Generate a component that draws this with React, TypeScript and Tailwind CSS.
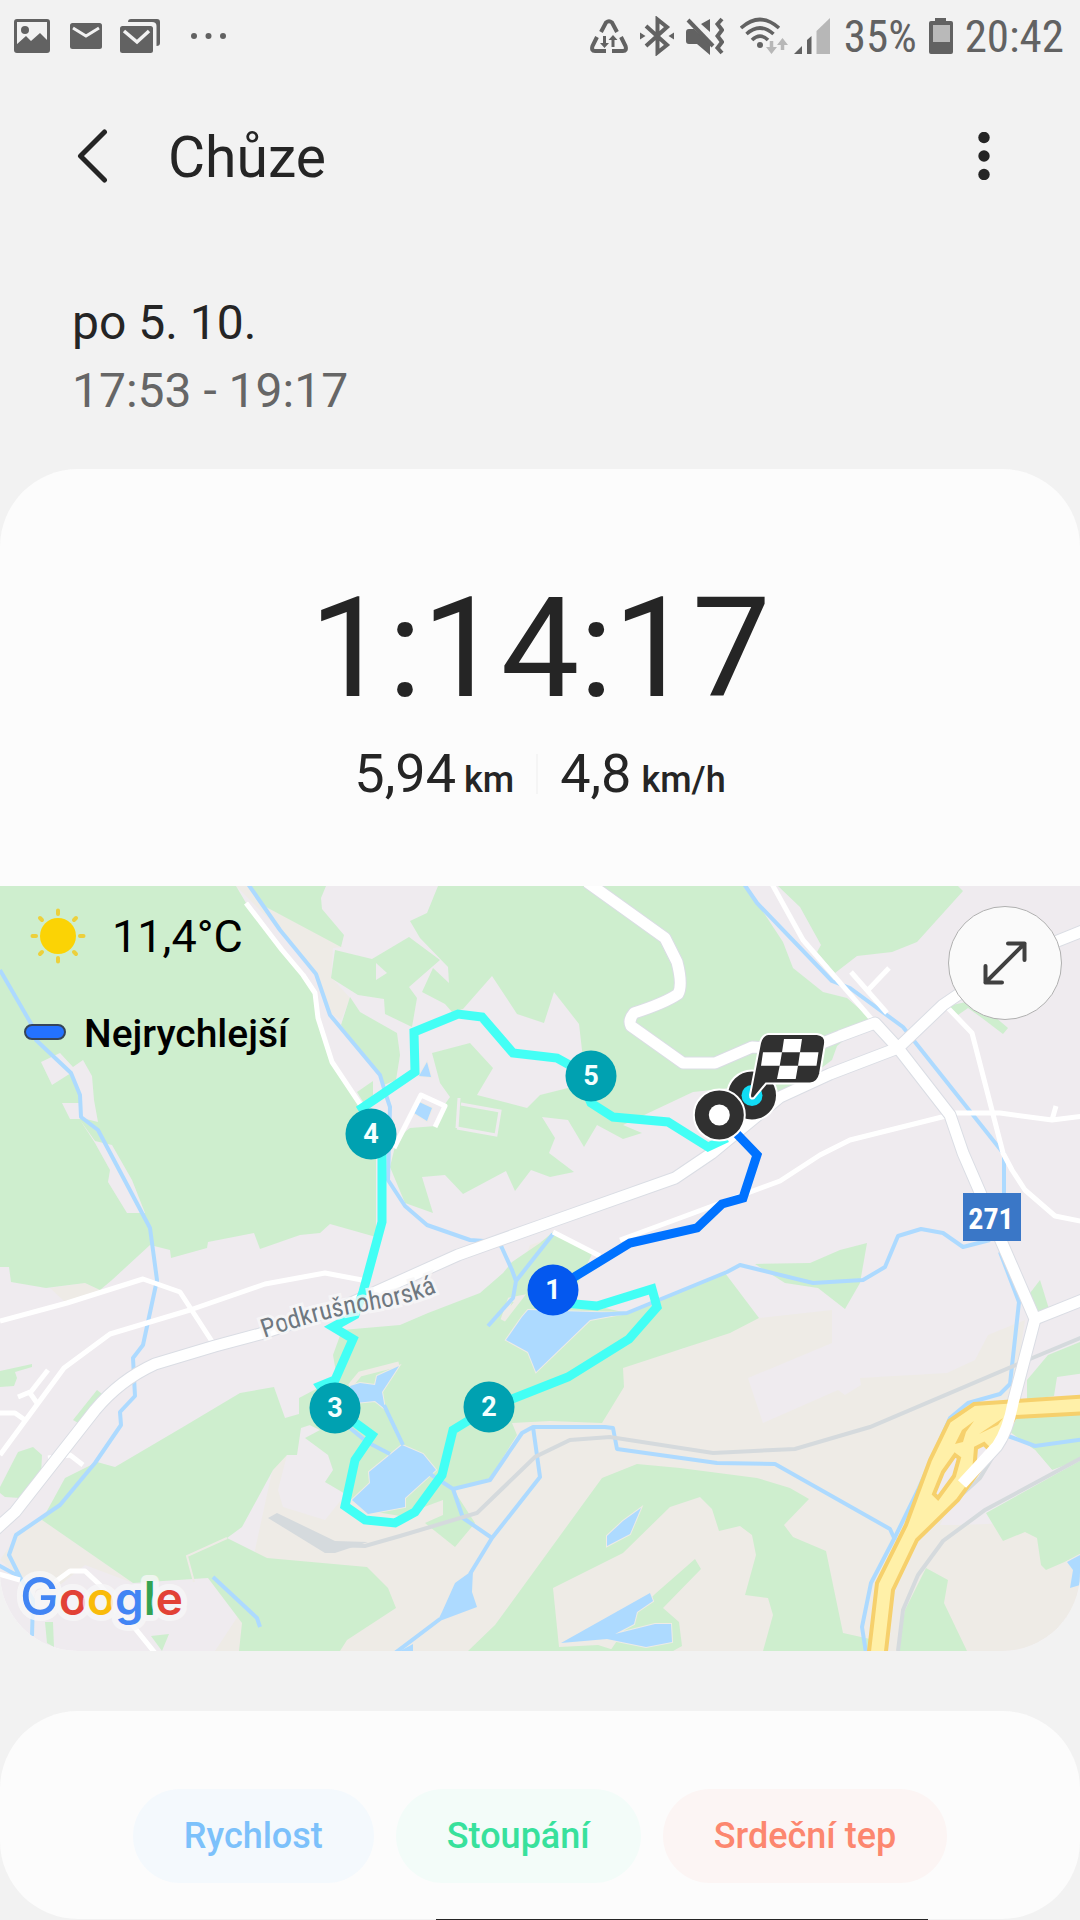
const fastest = 'Nejrychlejší';

const metrics = [
  { label: 'Rychlost', className: 'bg-[#f4f9fd] text-[#7cc1fb]' },
  { label: 'Stoupání', className: 'bg-[#f3fcf9] text-[#38e19c]' },
  { label: 'Srdeční tep', className: 'bg-[#fcf5f4] text-[#fc876f]' },
];

const kilometres = [
  { n: 5, x: 591, y: 1076, fill: '#00a1b1' },
  { n: 4, x: 371, y: 1134, fill: '#00a1b1' },
  { n: 3, x: 335, y: 1408, fill: '#00a1b1' },
  { n: 2, x: 489, y: 1407, fill: '#00a1b1' },
  { n: 1, x: 553, y: 1290, fill: '#0458ef' },
];

const majorRoads = [
  'M-5 1530L15 1512 95 1410Q120 1380 155 1364L215 1346 260 1334 340 1308 458 1255 545 1224 675 1178 712 1153 780 1097 830 1074 898 1048',
  'M587 882L665 938 677 962Q683 985 678 994 665 1003 634 1013 628 1020 631 1026L683 1063 715 1063 752 1047 805 1050 840 1036 875 1023 898 1048 950 1115 963 1153 1035 1319 1013 1403Q1008 1430 997 1446L962 1484',
  'M898 1048L943 1005 965 990 1040 948 1085 930',
  'M1035 1319L1085 1299',
];

const minorRoads = [
  'M246 903L282 950 303 975 315 993 318 1018 332 1062 362 1107',
  'M0 1321L67 1303 143 1279 180 1292 213 1343',
  'M0 1455L64 1368 110 1334 190 1310 265 1284 325 1273 362 1280',
  'M0 1413H15L25 1420',
  'M37 1403L30 1393 48 1370M18 1397L30 1392',
  'M48 1458L70 1455 83 1465',
  'M772 884L803 940 875 1023',
  'M851 972L887 1013M868 990L889 968',
  'M948 1008L972 1033 1003 1153 1012 1170 1025 1190 1055 1216 1085 1222',
  'M950 1113H1000L1052 1120 1085 1116M1052 1120L1056 1106',
  'M950 1115L850 1140 820 1155 780 1181 680 1218 620 1240',
  'M553 1232L600 1256',
  'M394 1148L421 1095 445 1106 435 1127',
  'M-5 1573L20 1580M55 1582L70 1571H85L100 1585 155 1653',
];

const rivers = [
  'M248 884L280 930 316 974 330 1015 380 1075 385 1092 390 1107 388 1180 405 1206 427 1225 470 1240 499 1242 502 1248 512 1270 516 1281 513 1298 488 1326M553 1234L516 1281',
  'M0 970L33 1027 36 1040 71 1073 80 1095 81 1117 98 1130 150 1228 157 1280 143 1345 133 1358 135 1396 120 1412 121 1425 95 1463 60 1505 16 1535 9 1555 20 1577 33 1600 32 1636M-2 1565L20 1577',
  'M744 884L757 903 832 981 850 988 903 1027 1004 1154V1210M1000 1252L1019 1302 1010 1384 1000 1394 968 1403 950 1418 918 1490 895 1537 871 1583 862 1627 866 1653',
  'M580 1316L627 1313 727 1272 740 1265 813 1283 863 1280 885 1267 898 1236 921 1229 943 1233 963 1247 990 1240',
  'M453 1489L490 1480 522 1433 533 1427H605L613 1428 617 1449 717 1463 775 1464 890 1529 895 1540',
  'M533 1427L540 1477 492 1538 470 1574M430 1474L453 1489 463 1518 492 1538',
  'M440 1619L395 1653M384 1405L403 1445M350 1428L367 1442 390 1454',
  'M213 1577L257 1618 260 1627',
  'M1008 1436L1035 1446 1085 1439',
];

const forests = [
  'M0 886H236L246 903 282 950 303 975 315 993 318 1018 332 1062 360 1105 376 1130V1237L330 1224 320 1233 300 1235 260 1249 254 1233 208 1242 207 1248 171 1258 170 1250 150 1245 112 1280 100 1290 85 1283 46 1288 11 1282 9 1267H0Z',
  'M249 886H326L321 898 322 909 344 935 341 947 266 907Z',
  'M335 950L372 959 409 937 440 960 409 987 417 998 412 1027 385 1014 384 999 358 995 331 978Z',
  'M350 997L360 1012 397 1033 400 1055 396 1080 384 1085 378 1074 341 1025Z',
  'M357 1092L373 1081V1095L365 1105Z',
  // hills above the town
  'M438 886L427 913 410 921 420 938 448 967 449 983 433 968 422 992 445 1004 452 1012 463 1009 492 976 517 1014 544 1023 554 992 579 1024 582 1050 580 1085 540 1095 527 1108 477 1095 493 1068 470 1043 432 1053 440 1083 450 1097 445 1104 436 1126 410 1128 397 1138 390 1167 405 1203 433 1213 422 1177 445 1175 463 1194 506 1171 515 1191 531 1170 550 1177 574 1172 549 1153 555 1138 542 1117 568 1120 584 1147 597 1125 623 1139 642 1133 623 1125 693 1092 730 1088 790 1092 832 1060 837 1046 870 1018 847 998 823 992 793 968 783 942 760 907 745 886Z',
  'M778 886H958L963 891 917 942 892 952 857 956 835 973 817 952 821 945 800 907Z',
  'M948 1006L975 1000 1008 1028 1003 1034 982 1018 968 1008 958 1015Z',
  'M755 1264L810 1263 840 1250 867 1243 860 1283 845 1309 818 1288 785 1283Z',
  'M0 1371L32 1364V1367L15 1372 17 1378 14 1386 0 1387Z',
  'M73 1420L97 1390 107 1398 90 1420 80 1424Z',
  'M0 1487L18 1452 33 1447 42 1455 41 1475 20 1498 5 1497 0 1493Z',
  // woods round the lakes
  'M342 1330L400 1325 428 1313 480 1293 503 1273 512 1262 540 1243 553 1232 593 1252 570 1300 627 1313 725 1273 759 1318 730 1333 623 1368 624 1387 602 1423 550 1421 512 1423 517 1435 490 1478 453 1489 475 1523 455 1547 425 1523 443 1515V1500L400 1516 365 1510 342 1492 325 1482 333 1470 328 1455 305 1438 320 1430 299 1420 299 1398 337 1378 333 1355Z',
  'M65 1478L97 1462 115 1467 183 1427 240 1393 274 1387 285 1418 299 1414 V1398H320L325 1420 301 1428 297 1455H287L273 1470 242 1527 227 1538 267 1558 367 1567 388 1588 396 1608 347 1640 340 1651H239L242 1623 208 1578 133 1583 42 1520Z',
  'M637 1464L680 1468 757 1478 790 1488 809 1499 784 1525 793 1537 826 1551 843 1633 870 1639V1651H763L773 1615 768 1598 745 1595 756 1555 752 1535 740 1526 719 1531 712 1509 700 1497 670 1507 623 1553 553 1588 559 1647 598 1645 617 1651H468L495 1625 602 1478Z',
  'M695 1559L701 1569 663 1608 679 1622 682 1646 673 1651H610L637 1612 655 1594Z',
  'M1027 1297L1040 1280 1049 1309 1035 1314Z',
  'M1027 1380L1048 1355 1085 1340V1373L1057 1377 1054 1396 1027 1400Z',
  'M1013 1415L1085 1410V1458L1052 1470 1035 1450 1010 1432Z',
  'M986 1513L1085 1458V1553L1046 1570 1041 1565 1037 1538 1025 1532 1003 1541Z',
  'M926 1568L948 1580 944 1603 967 1651H897L905 1610Z',
  'M45 1622H53L54 1647 47 1643ZM151 1636L169 1634 162 1651Z',
];

const lakes = [
  'M528 1310L592 1312 627 1313 590 1320 536 1372 528 1352 506 1340 522 1317Z',
  'M402 1445L423 1454 436 1470 405 1498V1507L368 1514 352 1500 370 1483 369 1472Z',
  'M350 1386L360 1383 375 1385 377 1376 399 1366 382 1392 385 1409 375 1401 355 1403Z',
  'M641 1508L630 1534 607 1546V1536L623 1521Z',
  'M650 1593L653 1601 637 1612 634 1624 615 1634 655 1624H671L672 1642 646 1647 607 1639 561 1643Z',
  'M473 1570L472 1592 477 1607 437 1622 442 1612 455 1583ZM413 1644V1651H400Z',
  'M1067 1562L1080 1555V1585L1070 1588 1073 1570Z',
  'M417 1101L432 1108 427 1121 414 1113ZM427 1062L431 1077 419 1076Z',
];

function StatusBar() {
  return (
    <div className="flex h-18 items-center justify-between pl-3.5 pr-4 text-[#626262]">
      <div className="flex items-center">
        <svg className="h-9 w-9" viewBox="0 0 36 36" fill="none">
          <rect x="1.5" y="2.5" width="33" height="31" rx="1.5" stroke="currentColor" strokeWidth="3" />
          <circle cx="11" cy="12" r="4" fill="currentColor" />
          <path d="M2 27L12 18 17 23 26 15 34 23V33H2Z" fill="currentColor" />
        </svg>
        <svg className="ml-5 h-9 w-8" viewBox="0 0 32 36" fill="none">
          <rect y="5" width="32" height="26" rx="2.5" fill="currentColor" />
          <path d="M3 10L16 18 29 10" stroke="#f2f2f2" strokeWidth="3" />
        </svg>
        <svg className="ml-4.5 h-9 w-10" viewBox="0 0 40 36" fill="none">
          <rect y="8" width="33" height="27" rx="2.5" fill="currentColor" />
          <path d="M4 13L17 24 29 13" stroke="#f2f2f2" strokeWidth="3.5" />
          <path d="M8 4Q8 1 11 1H37Q40 1 40 4V25Q40 28 36.500 28V8Q36.500 4 32 4Z" fill="currentColor" />
        </svg>
        <svg className="ml-7.5 h-9 w-9" viewBox="0 0 36 36" fill="currentColor">
          <circle cx="4" cy="18" r="3" />
          <circle cx="18.500" cy="18" r="3" />
          <circle cx="33" cy="18" r="3" />
        </svg>
      </div>

      <div className="flex items-center gap-3">
        <svg className="h-9 w-9.5" viewBox="0 0 38 36" fill="none" stroke="currentColor" strokeWidth="4">
          <path d="M11 14L16 4.500Q19 2 22 4.500L27 14" />
          <path d="M7 19L2.500 28Q1 33 5 33H16" />
          <path d="M31 19L35.500 28Q37 33 33 33H22" />
          <path d="M14.500 18V27M23 29V20" strokeWidth="3" />
          <path d="M10 25H19L14.500 30ZM18.500 22H27.500L23 17Z" fill="currentColor" stroke="none" />
        </svg>
        <svg className="h-10 w-8.5" viewBox="0 0 34 40" fill="none" stroke="currentColor" strokeWidth="4">
          <path d="M6 10L27 29 17.500 36.500V3.500L27 11 6 30" />
          <path d="M0 16.500L5.500 20 0 23.500ZM34 16.500L28.500 20 34 23.500Z" fill="currentColor" stroke="none" />
        </svg>
        <svg className="h-10 w-9.5" viewBox="0 0 38 40" fill="none">
          <path d="M0 16Q0 13 3 13H8L24 27V39L11 28H3Q0 28 0 25ZM24 3V16L15 8Z" fill="currentColor" />
          <path d="M2 4L27 30" stroke="currentColor" strokeWidth="4" />
          <path d="M36 3L31.500 8 36 14 31.500 20 36 26 31.500 32 36 37" stroke="currentColor" strokeWidth="4" />
        </svg>
        <div className="ml-1 flex items-center gap-1.5">
          <svg className="h-9.5 w-12" viewBox="0 0 48 38" fill="none">
            <path d="M1 11Q20-6 39 11M6.500 17Q20 5 33.500 17M12 23Q20 15 28 23" stroke="currentColor" strokeWidth="3.600" />
            <circle cx="20" cy="28" r="3" fill="currentColor" />
            <path d="M31.500 24V32M42.500 33V25" stroke="#b7b7b7" strokeWidth="3.500" />
            <path d="M26 30H37L31.500 37ZM37 28H48L42.500 21Z" fill="#b7b7b7" />
          </svg>
          <svg className="h-9.5 w-9.5" viewBox="0 0 38 38">
            <path d="M0 37L8 29V37ZM13 37V23L17.500 19V37Z" fill="currentColor" />
            <path d="M22.500 37V14L36 1V37Z" fill="#b7b7b7" />
          </svg>
        </div>
        <span className="font-['Roboto_Condensed',Roboto,sans-serif] text-[45px] leading-none">35%</span>
        <svg className="h-9 w-6" viewBox="0 0 24 36">
          <path d="M6 0H17V3H22Q24 3 24 5V34Q24 36 22 36H2Q0 36 0 34V5Q0 3 2 3H6Z" fill="currentColor" />
          <path d="M4 7H21V24H4Z" fill="#b9b9b9" />
        </svg>
        <span className="font-['Roboto_Condensed',Roboto,sans-serif] text-[45px] leading-none">20:42</span>
      </div>
    </div>
  );
}

function RouteMap() {
  return (
    <svg className="block w-full" viewBox="0 886 1080 765" role="img" aria-label="Mapa trasy">
      <rect y="886" width="1080" height="765" fill="#efebef" />

      <g fill="#eeebe6">
        <path d="M236 886H248L266 907 343 947 333 948 331 977 350 998 341 1020 330 1013 315 972 275 925Z" />
        <path d="M273 1467L287 1455 278 1490 283 1507 325 1520 345 1495 370 1400 620 1360 680 1350 759 1318 832 1310V1343L748 1378 763 1423 838 1390 845 1395 861 1385 860 1378 947 1373 975 1360 988 1335 1025 1320 1013 1400 960 1525 1085 1520V1651H215L242 1610Z" />
        <path d="M0 1560L17 1535 42 1520 133 1583 85 1565 60 1585 20 1577Z" />
        <path d="M50 1288L85 1283 100 1290 65 1302ZM515 1285L530 1245 545 1240 530 1290Z" />
      </g>

      <g fill="#ceeece">
        {forests.map((d) => <path key={d} d={d} />)}
      </g>

      <g fill="#efebef">
        <path d="M41 1062L60 1053 73 1067 83 1060 92 1076 94 1100 98 1122 82 1118 80 1095 71 1073 52 1085ZM62 1103H80L81 1119H70Z" />
        <path d="M80 1120L95 1141 112 1145 132 1180 145 1213H127L108 1182 110 1170 95 1143Z" />
        <path d="M376 963L387 973 376 980Z" />
        <path d="M1005 1436L1035 1450 1052 1470 986 1510 960 1525H940L955 1495Z" />
      </g>
      <path d="M459 1098L457 1128M461 1104L500 1111 496 1135 457 1128" fill="none" stroke="#efebef" strokeWidth="3" />
      <path d="M227 1538L187 1556 194 1582" fill="none" stroke="#eeebe6" strokeWidth="2" />
      <path d="M350 1386L360 1374 399 1364M510 1300L520 1298 503 1320Z" fill="none" stroke="#eeebe6" strokeWidth="5" />

      <g fill="#addaff" stroke="#eeebe6" strokeWidth="2" paintOrder="stroke">
        {lakes.map((d) => <path key={d} d={d} />)}
      </g>
      <g fill="none" stroke="#addaff" strokeWidth="4" strokeLinejoin="round">
        {rivers.map((d) => <path key={d} d={d} />)}
      </g>

      {/* railway */}
      <g fill="none" stroke="#d5dadd" strokeWidth="4">
        <path d="M330 1545L365 1546 400 1536 477 1513 535 1457 570 1440 610 1437 713 1453 795 1449 870 1427 1018 1364 1085 1336" />
        <path d="M898 1651L903 1610 918 1575 943 1541 985 1510 1085 1456M958 1498L980 1478 992 1458" />
        <path d="M268 1518L277 1513 335 1541 368 1542 335 1553H325Z" fill="#d5dadd" stroke="none" />
      </g>

      <g fill="none" stroke="#fff" strokeWidth="5" strokeLinejoin="round">
        {minorRoads.map((d) => <path key={d} d={d} />)}
      </g>
      <g fill="none" stroke="#dadde4" strokeWidth="13" strokeLinejoin="round">
        {majorRoads.map((d) => <path key={d} d={d} />)}
      </g>

      {/* motorway */}
      <g fill="#fff0a8" stroke="#f6d06c" strokeWidth="4">
        <path d="M868 1660L877 1583 906 1525 930 1460 949 1421 974 1404 1090 1396V1413L1015 1417 997 1446 958 1500 917 1540 893 1590 885 1660Z" />
        <path d="M955 1455L959 1458 954 1476 938 1498 934 1494 943 1472Z" fill="#efebef" />
        <path d="M976 1448L984 1444 991 1451 974 1472Z" fill="#efebef" />
        <path d="M955 1444L962 1430 974 1421 966 1432 963 1442ZM979 1434L1003 1418 998 1425Z" fill="#f6d06c" stroke="none" />
      </g>

      <g fill="none" stroke="#fff" strokeWidth="11" strokeLinejoin="round">
        {majorRoads.map((d) => <path key={d} d={d} />)}
      </g>

      {/* walked route */}
      <g fill="none" strokeWidth="9">
        <path
          d="M727 1138L708 1147 668 1122 613 1117 591 1103 575 1068 557 1058 513 1053 482 1017 458 1014 414 1032 415 1072 362 1108 382 1140V1222L363 1292 355 1315 333 1327 353 1339 335 1380 320 1386 335 1408 372 1435 355 1460 345 1506 365 1520 395 1523 415 1512 442 1475 453 1430 489 1408 568 1377 629 1339 657 1307 652 1289 597 1306 553 1302"
          stroke="#43fff5"
        />
        <path d="M553 1290L630 1243 697 1228 722 1204 743 1198 757 1155 735 1132" stroke="#0072ff" />
      </g>

      <path id="road-name" d="M264 1338C293 1328 320 1320 350 1314S405 1306 440 1291" fill="none" />
      <text
        className="font-['Roboto_Condensed',Roboto,sans-serif] text-[26px]"
        fill="#6f7880"
        stroke="#f7f7f8"
        strokeOpacity="0.8"
        strokeWidth="6"
        paintOrder="stroke"
      >
        <textPath href="#road-name">Podkrušnohorská</textPath>
      </text>

      <rect x="963" y="1193" width="58" height="48" fill="#3a77c7" />
      <text className="font-['Roboto_Condensed',Roboto,sans-serif] text-[30px] font-bold" x="991" y="1229" textAnchor="middle" fill="#fff">271</text>

      {kilometres.map((km) => (
        <g key={km.n}>
          <circle cx={km.x} cy={km.y} r="25.5" fill={km.fill} />
          <text className="font-[Roboto,sans-serif] text-[27px] font-bold" x={km.x} y={km.y + 9} textAnchor="middle" fill="#f4ffff">
            {km.n}
          </text>
        </g>
      ))}

      {/* finish and start */}
      <g fill="#303030" stroke="#fff" strokeWidth="2">
        <circle cx="752" cy="1095.500" r="25" />
        <circle cx="752" cy="1095.500" r="10.500" fill="#11dcf5" stroke="none" />
        <path d="M768 1034H817Q826 1035 825 1044L820 1074Q818 1083 810 1083.500H766L754 1098Q750 1100 750 1095L760 1043Q762 1035 768 1034Z" />
        <path
          d="M784 1039H802L800 1052.300H782ZM763 1052.300H782L779.700 1065.700H761ZM800 1052.300H818.500L816.500 1065.700H798ZM779.700 1065.700H798L795.700 1079H777Z"
          fill="#fff"
          stroke="none"
        />
        <circle cx="719.300" cy="1115" r="25.500" />
        <circle cx="719.300" cy="1115" r="10.500" fill="#fff" stroke="none" />
      </g>

      <text className="font-[Inter,sans-serif] text-[46px] font-semibold" x="20" y="1615" stroke="#f7f7f8" strokeOpacity="0.8" strokeWidth="12" strokeLinejoin="round" paintOrder="stroke">
        <tspan className="text-[52px] font-medium" fill="#4285f4">G</tspan>
        <tspan fill="#e24236">o</tspan>
        <tspan fill="#f9bb0b">o</tspan>
        <tspan fill="#4285f4">g</tspan>
        <tspan fill="#34a351">l</tspan>
        <tspan fill="#e24236">e</tspan>
      </text>
    </svg>
  );
}

export default function App() {
  return (
    <div className="relative min-h-screen overflow-hidden bg-[#f2f2f2] font-[Roboto,sans-serif] text-[#252525]">
      <StatusBar />

      <header className="flex h-42 items-center pl-18 pr-18">
        <button type="button" aria-label="Zpět" className="flex w-24 items-center pl-1">
          <svg className="h-14 w-8" viewBox="0 0 32 56" fill="none">
            <path d="M28.500 4L4.500 28 28.500 52" stroke="#252525" strokeWidth="5" strokeLinecap="round" strokeLinejoin="round" />
          </svg>
        </button>
        <h1 className="grow pt-1 text-[57px] leading-17">Chůze</h1>
        <button type="button" aria-label="Další možnosti" className="flex w-12 justify-center">
          <svg className="h-12 w-3" viewBox="0 0 12 48" fill="#252525">
            <circle cx="6" cy="5.500" r="5.700" />
            <circle cx="6" cy="24" r="5.700" />
            <circle cx="6" cy="42.500" r="5.700" />
          </svg>
        </button>
      </header>

      <div className="px-18 pt-[49px] pb-11 text-[48px] leading-17">
        <p>po 5. 10.</p>
        <p className="text-[#666]">17:53 - 19:17</p>
      </div>

      <section className="overflow-hidden rounded-[78px] bg-[#fcfcfc]">
        <div className="flex flex-col items-center pt-[109px] pb-20">
          <p className="text-[140px] leading-none">1:14:17</p>
          <div className="mt-6 flex items-center text-[54px] leading-16">
            <p>
              5,94<span className="ml-2 text-[36px] leading-none font-medium">km</span>
            </p>
            <div className="mx-5.5 h-10 w-0.5 bg-[#f5f5f5]" />
            <p>
              4,8<span className="ml-2.5 text-[36px] leading-none font-medium">km/h</span>
            </p>
          </div>
        </div>

        <div className="relative">
          <RouteMap />
          <div className="absolute inset-x-0 top-0 flex items-start justify-between pl-6 pr-4.5 pt-5 text-black">
            <div>
              <div className="flex h-15 items-center gap-6.5 pl-1.5">
                <svg className="h-14 w-14" viewBox="0 0 56 56" fill="#fbd305">
                  <circle cx="28" cy="28" r="18" />
                  <path
                    d="M28 2.500V6M28 50V53.500M2.500 28H6M50 28H53.500M10 10L12 12M44 44L46 46M10 46L12 44M44 12L46 10"
                    stroke="#ecd03c"
                    strokeWidth="4"
                    strokeLinecap="round"
                  />
                </svg>
                <span className="text-[45px] leading-none">11,4°C</span>
              </div>
              <div className="mt-10.5 flex h-12 items-center gap-4.5">
                <span className="h-4 w-10.5 rounded-full border-2 border-[#36455a] bg-[#2472ff]" />
                <span className="pt-1 text-[39px] leading-none font-medium">{fastest}</span>
              </div>
            </div>
            <button type="button" aria-label="Zvětšit mapu" className="flex size-28.5 items-center justify-center rounded-full border border-[#b0b0b0] bg-[#fafafa]">
              <svg className="size-12" viewBox="0 0 48 48" fill="none" stroke="#404040" strokeWidth="4" strokeLinecap="round" strokeLinejoin="round">
                <path d="M4.500 43.500L43.500 4.500M27 4.500H43.500V21M4.500 27V43.500H21" />
              </svg>
            </button>
          </div>
        </div>
      </section>

      <section className="mt-15 flex justify-center gap-5.5 rounded-[78px] bg-[#fcfcfc] pt-19.5 pb-9">
        {metrics.map((metric) => (
          <button key={metric.label} type="button" className={`h-23.5 rounded-full px-[51px] text-[36px] font-medium ${metric.className}`}>
            {metric.label}
          </button>
        ))}
      </section>

      <div className="absolute bottom-0 left-[436px] h-px w-[492px] bg-[#252525]" />
    </div>
  );
}
